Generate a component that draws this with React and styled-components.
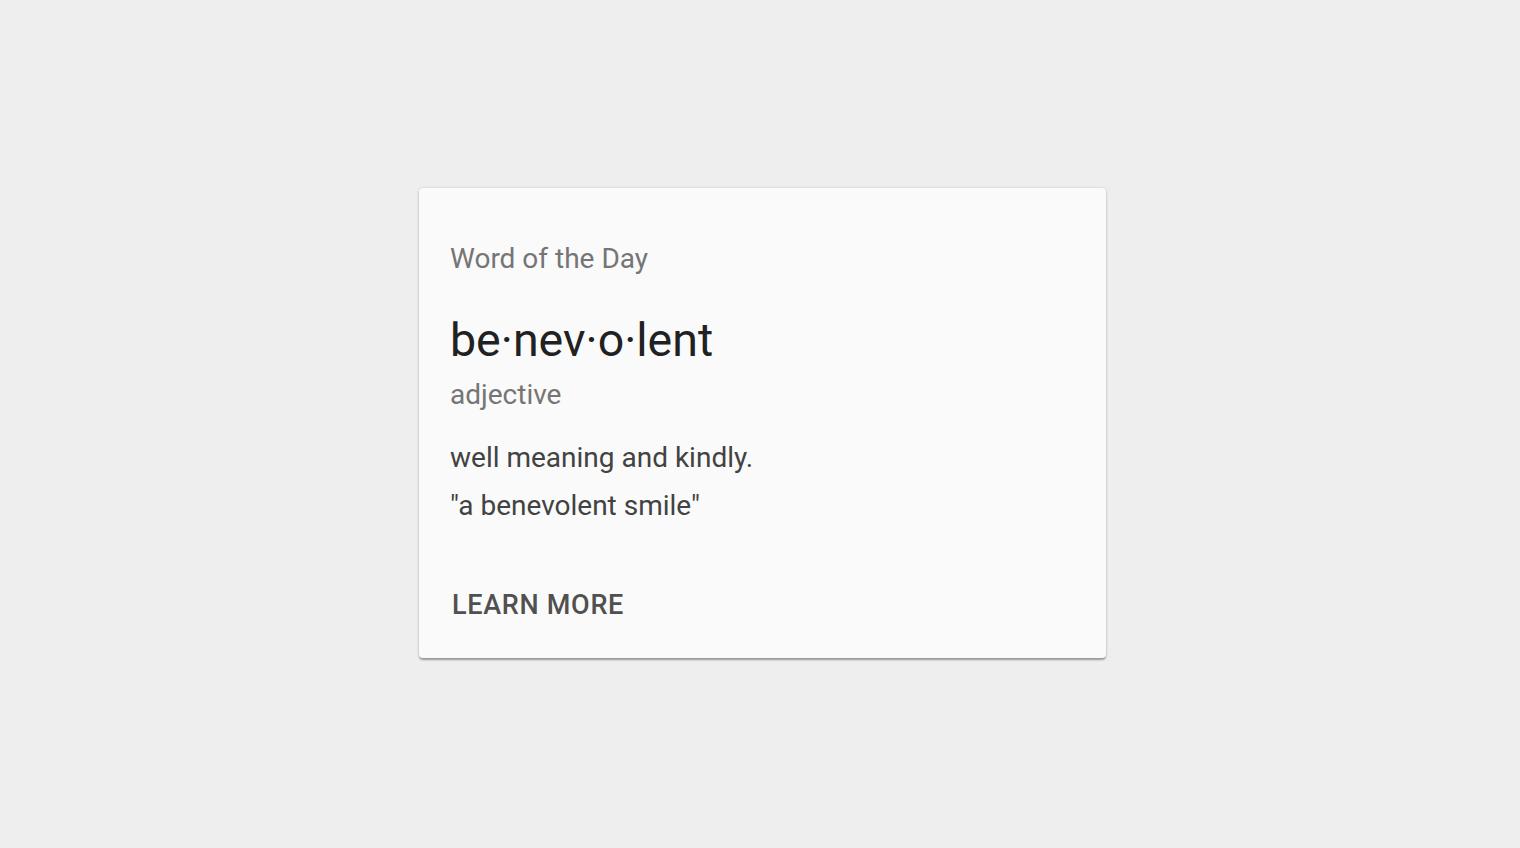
import React from "react";
import styled, { createGlobalStyle } from "styled-components";

const GlobalStyle = createGlobalStyle`
    html, body {
        margin: 0;
        padding: 0;
        background-color: #eeeeee;
        font-family: Roboto, "Noto Sans", sans-serif;
    }
`;

const Page = styled.div`
    display: flex;
    align-items: center;
    justify-content: center;
    min-height: 100vh;
    padding: 0 0 2px 5px;
    box-sizing: border-box;
`;

const Card = styled.div`
    display: flex;
    flex-direction: column;
    width: 687px;
    background-color: #fafafa;
    border-radius: 4px;
    box-shadow: 0 2px 2px rgba(0, 0, 0, 0.22), 0 0 3px rgba(0, 0, 0, 0.14),
        0 3px 2px -1px rgba(0, 0, 0, 0.14);
`;

const Content = styled.div`
    display: flex;
    flex-direction: column;
    padding: 51px 31px 33px;
`;

const Text = styled.p`
    margin: 0 0 ${(props) => props.gap || "0"};
    font-size: ${(props) => props.size || "28px"};
    line-height: ${(props) => props.lh || "40px"};
    color: ${(props) => props.color || "#757575"};
    font-weight: 400;
`;

const Actions = styled.div`
    display: flex;
    padding: 14px 15px 24px;
`;

const Button = styled.button`
    background: transparent;
    border: none;
    padding: 9px 16px 9px 18px;
    font-family: Roboto, "Noto Sans", sans-serif;
    font-size: 27px;
    line-height: 40px;
    font-weight: 500;
    letter-spacing: 0.7px;
    text-transform: uppercase;
    color: #505050;
    cursor: pointer;
    border-radius: 4px;

    &:hover {
        background-color: rgba(0, 0, 0, 0.04);
    }
`;

const App = () => {
    return (
        <Page>
            <GlobalStyle />
            <Card>
                <Content>
                    <Text gap="30px">Word of the Day</Text>
                    <Text size="46.5px" lh="62px" color="#212121" gap="4px">
                        be·nev·o·lent
                    </Text>
                    <Text gap="19px">adjective</Text>
                    <Text lh="47.6px" color="#424242">
                        well meaning and kindly.
                        <br />
                        {'"a benevolent smile"'}
                    </Text>
                </Content>
                <Actions>
                    <Button>Learn More</Button>
                </Actions>
            </Card>
        </Page>
    );
};

export default App;
